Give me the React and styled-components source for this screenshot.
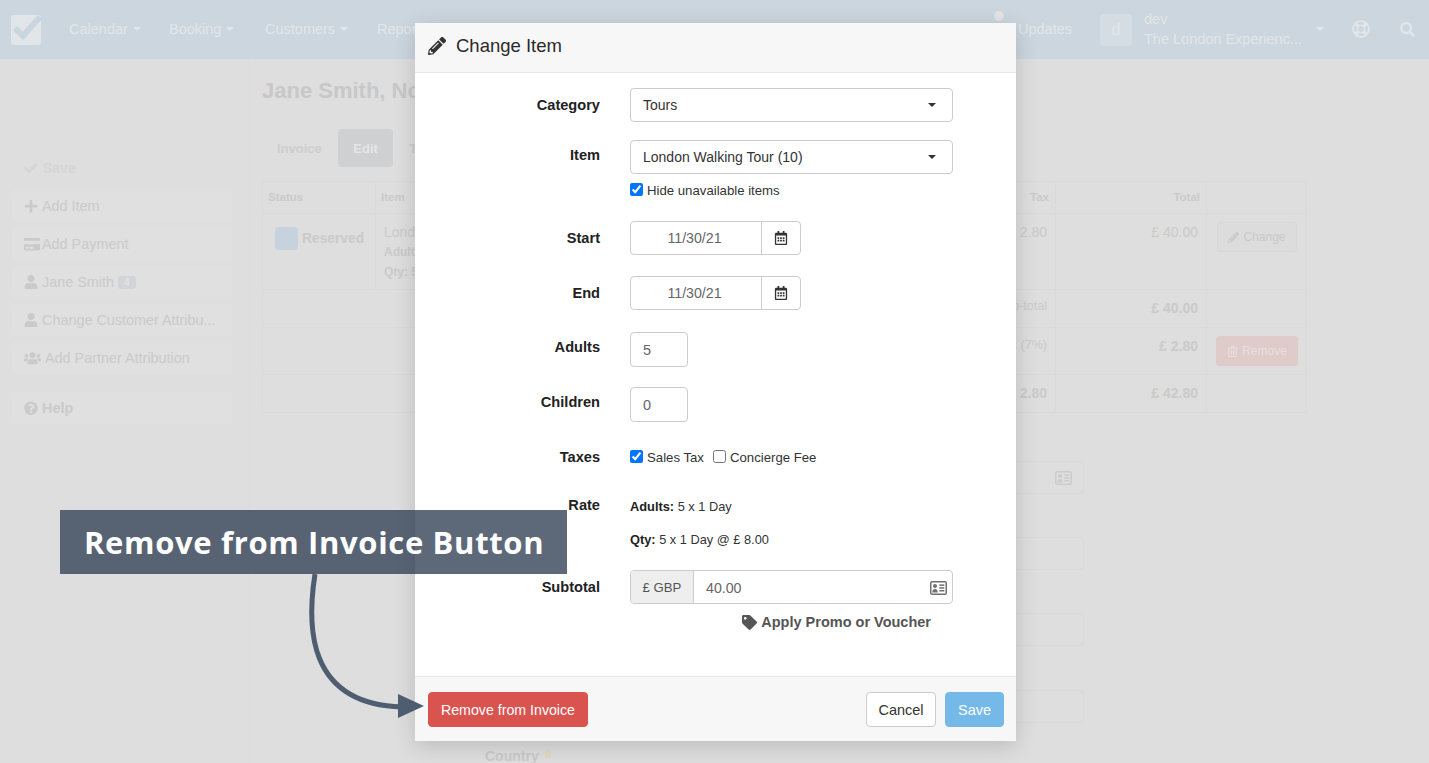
import React from 'react';
import styled, { createGlobalStyle } from 'styled-components';
import {
  FaPencilAlt, FaPlus, FaCreditCard, FaUser, FaUsers, FaQuestionCircle, FaTag,
  FaRegCalendarAlt, FaRegTrashAlt, FaSearch, FaCheck, FaStar, FaRegLifeRing,
} from 'react-icons/fa';

const Global = createGlobalStyle`
  html, body { margin: 0; padding: 0; height: 100%; overflow: hidden; }
  body { font-family: "Liberation Sans", Arial, sans-serif; font-size: 14px; background: #dedede; }
  * { box-sizing: border-box; }
`;

const Page = styled.div`
  position: relative;
  width: 1429px;
  height: 763px;
  overflow: hidden;
  background: #dedede;
  color: #cacaca;
`;

/* ---- dimmed page behind the modal ---- */
const Navbar = styled.header`
  display: flex;
  align-items: center;
  height: 59px;
  padding: 0 0 2px 11px;
  background: #cbd6de;
  color: #e2e6e9;
  font-size: 14.5px;
`;
const LogoLink = styled.span`
  display: flex;
  width: 58px;
  margin-top: 2px;
`;
const NavLink = styled.span`
  display: flex;
  align-items: center;
  gap: 5px;
  width: ${(p) => p.$w}px;
  white-space: nowrap;
`;
const Caret = styled.i`
  display: inline-block;
  border-top: 4px solid ${(p) => p.$color || 'currentColor'};
  border-left: 4px solid transparent;
  border-right: 4px solid transparent;
`;
const NavRight = styled.div`
  display: flex;
  align-items: center;
  margin-left: auto;
  padding-right: 14px;
`;
const UpdatesLink = styled.span`
  position: relative;
  width: 82px;
  &::before {
    content: '';
    position: absolute;
    left: -24px;
    top: -10px;
    width: 10px;
    height: 10px;
    border-radius: 50%;
    background: #e2e4e6;
  }
`;
const Avatar = styled.span`
  display: flex;
  align-items: center;
  justify-content: center;
  width: 32px;
  height: 32px;
  margin: 2px 12px 0 0;
  border-radius: 4px;
  background: #d4dde3;
  font-size: 17px;
`;
const Account = styled.div`
  width: 172px;
  line-height: 20px;
  white-space: nowrap;
  margin-top: 1px;
`;
const NavIcons = styled.div`
  display: flex;
  align-items: center;
  font-size: 16px;
  gap: 30px;
  margin: 1px 0 0 28px;
`;

const Layout = styled.div`
  display: flex;
  height: 704px;
`;
const Sidebar = styled.aside`
  flex: none;
  width: 249px;
  padding: 100px 16px 0 12px;
  border-right: 1px solid #dcdcdc;
`;
const SaveLine = styled.div`
  display: flex;
  align-items: center;
  gap: 6px;
  height: 18px;
  padding-left: 12px;
  margin-bottom: 13px;
  font-weight: bold;
  color: #d5d5d5;
`;
const SideButton = styled.div`
  display: flex;
  align-items: center;
  gap: ${(p) => p.$gap ?? 4}px;
  height: 32px;
  margin-bottom: ${(p) => p.$after || 6}px;
  padding-left: 12px;
  border-radius: 4px;
  background: #e0e0e0;
  font-size: 14.4px;
  font-weight: ${(p) => (p.$bold ? 'bold' : 'normal')};
  white-space: nowrap;
  svg { flex: none; width: ${(p) => p.$icon || 14}px; }
`;
const CountBadge = styled.b`
  padding: 1px 6px;
  border-radius: 3px;
  background: #d2d4d8;
  color: #e2e2e2;
  font-size: 10px;
`;
const Main = styled.main`
  flex: 1;
  padding: 19px 0 0 13px;
`;
const Title = styled.h1`
  margin: 0 0 26px;
  font-size: 22px;
  line-height: 25px;
  font-weight: bold;
  color: #c8c8c8;
  white-space: nowrap;
`;
const Tabs = styled.div`
  display: flex;
  gap: 1px;
  margin-bottom: 14px;
`;
const Tab = styled.span`
  display: flex;
  align-items: center;
  height: 38px;
  padding: 0 15.5px 0 15px;
  border-radius: 4px;
  font-size: 13px;
  font-weight: bold;
  color: ${(p) => (p.$active ? '#e6e6e6' : '#cdcdcd')};
  background: ${(p) => (p.$active ? '#cfd0d1' : 'transparent')};
`;
const Table = styled.table`
  table-layout: fixed;
  width: 1045px;
  border-collapse: collapse;
  font-size: 14px;
`;
const Th = styled.th`
  height: 32px;
  padding: 0 6px 2px 5px;
  border: 1px solid #dadada;
  font-size: 11.5px;
  font-weight: bold;
  color: #cacaca;
  text-align: ${(p) => p.$align || 'left'};
`;
const Td = styled.td`
  height: ${(p) => p.$h}px;
  padding: ${(p) => p.$top ?? 10}px 8px 0;
  border: 1px solid #dadada;
  vertical-align: top;
  text-align: ${(p) => p.$align || 'left'};
  font-weight: ${(p) => (p.$bold ? 'bold' : 'normal')};
  font-size: ${(p) => p.$size || 14}px;
  overflow: hidden;
  white-space: nowrap;
`;
const StatusCell = styled.div`
  display: flex;
  align-items: center;
  gap: 4px;
  padding: 5px 0 0 4px;
  font-weight: bold;
  font-size: 13.8px;
`;
const Swatch = styled.i`
  width: 23px;
  height: 23px;
  border-radius: 4px;
  background: #c6d3de;
`;
const ItemLine = styled.div`
  font-size: ${(p) => p.$size || 12}px;
  line-height: 20px;
  font-weight: ${(p) => (p.$bold ? 'bold' : 'normal')};
`;
const GhostButton = styled.span`
  display: inline-flex;
  align-items: center;
  justify-content: center;
  gap: 4px;
  width: ${(p) => p.$w}px;
  height: 30px;
  margin: ${(p) => p.$m || '2px 0 0 2px'};
  border-radius: 3px;
  font-size: 12px;
  color: ${(p) => (p.$danger ? '#e9dfdf' : '#c9c9c9')};
  background: ${(p) => (p.$danger ? '#e0cbcb' : '#dcdcdc')};
  border: 1px solid ${(p) => (p.$danger ? '#e0cbcb' : '#d8d8d8')};
`;
const BackForm = styled.div`
  display: flex;
  flex-direction: column;
  margin: 48px 0 0 223px;
  width: 599px;
`;
const BackInput = styled.div`
  display: flex;
  align-items: center;
  justify-content: flex-end;
  height: 33px;
  margin-bottom: ${(p) => p.$after || 43}px;
  padding-right: 11px;
  border: 1px solid #d9d9d9;
  border-radius: 4px;
  color: #cbcbcb;
`;
const CountryLabel = styled.div`
  margin-top: -19px;
  font-weight: bold;
  color: #cacaca;
  white-space: nowrap;
  svg { margin-left: 4px; width: 10px; color: #e6d9c0; }
`;

/* ---- modal ---- */
const Modal = styled.section`
  position: absolute;
  left: 415px;
  top: 23px;
  display: flex;
  flex-direction: column;
  width: 601px;
  height: 718px;
  background: #fff;
  border-radius: 2px;
  color: #222;
  box-shadow: 0 5px 22px rgba(0, 0, 0, 0.16);
`;
const ModalHeader = styled.header`
  display: flex;
  align-items: center;
  gap: 10px;
  height: 50px;
  padding: 0 0 4px 13px;
  background: #f7f7f7;
  border-bottom: 1px solid #e8e8e8;
  font-size: 18.5px;
  color: #2b2b2b;
  svg { width: 18px; height: 18px; color: #333; }
`;
const ModalBody = styled.div`
  flex: 1;
  padding-top: 15px;
`;
const Row = styled.div`
  display: grid;
  grid-template-columns: 185px 323px;
  column-gap: 30px;
  margin-bottom: ${(p) => p.$after}px;
`;
const Label = styled.label`
  padding-top: ${(p) => p.$top ?? 8}px;
  text-align: right;
  font-weight: bold;
  font-size: 14.6px;
  line-height: 18px;
  color: #222;
`;
const SelectBox = styled.div`
  display: flex;
  align-items: center;
  justify-content: space-between;
  height: 34px;
  padding: 0 16px 0 12px;
  border: 1px solid #ccc;
  border-radius: 4px;
  font-size: 14px;
  color: #333;
`;
const CheckLine = styled.div`
  display: flex;
  align-items: center;
  gap: ${(p) => p.$gap || 0}px;
  height: ${(p) => p.$h || 17}px;
  margin-top: ${(p) => p.$top || 0}px;
  font-size: 13.2px;
  color: #333;
`;
const CheckItem = styled.label`
  display: flex;
  align-items: center;
  gap: 4px;
  input { margin: -3px 0 0; width: 13px; height: 13px; }
`;
const DateGroup = styled.div`
  display: flex;
  width: 171px;
  height: 34px;
  border: 1px solid #ccc;
  border-radius: 4px;
`;
const DateInput = styled.input`
  width: 131px;
  min-width: 0;
  padding: 0 3px 0 0;
  border: 0;
  border-right: 1px solid #ccc;
  border-radius: 4px 0 0 4px;
  background: transparent;
  text-align: center;
  font: 14.2px "Liberation Sans", Arial, sans-serif;
  color: #666;
`;
const DateAddon = styled.span`
  flex: 1;
  display: flex;
  align-items: center;
  justify-content: center;
  color: #333;
  font-size: 14px;
`;
const NumberInput = styled.input`
  width: 58px;
  height: 35px;
  padding: 0 12px;
  border: 1px solid #ccc;
  border-radius: 4px;
  font: 14.5px "Liberation Sans", Arial, sans-serif;
  color: #666;
`;
const RateLine = styled.div`
  font-size: 12.8px;
  line-height: 18px;
  color: #333;
  margin-bottom: ${(p) => p.$after || 0}px;
  b { color: #222; }
`;
const RateList = styled.div`
  padding-top: 2px;
`;
const MoneyGroup = styled.div`
  display: flex;
  height: 34px;
  border: 1px solid #ccc;
  border-radius: 4px;
  overflow: hidden;
`;
const Currency = styled.span`
  display: flex;
  align-items: center;
  justify-content: center;
  width: 63px;
  background: #eee;
  border-right: 1px solid #ccc;
  font-size: 13.2px;
  color: #555;
`;
const MoneyInput = styled.div`
  flex: 1;
  display: flex;
  align-items: center;
  justify-content: space-between;
  padding: 1px 5px 0 12px;
  font-size: 14.2px;
  color: #666;
`;
const PromoLink = styled.div`
  display: flex;
  align-items: center;
  justify-content: flex-end;
  gap: 4px;
  margin-top: 9px;
  padding-right: 22px;
  font-weight: bold;
  font-size: 14.5px;
  line-height: 18px;
  color: #555;
  svg { width: 15px; height: 15px; }
`;
const ModalFooter = styled.footer`
  display: flex;
  align-items: center;
  height: 65px;
  padding: 0 12px 0 13px;
  background: #f7f7f7;
  border-top: 1px solid #e8e8e8;
`;
const Button = styled.button`
  height: 35px;
  padding: 1px 0 0;
  width: ${(p) => p.$w}px;
  margin-left: ${(p) => p.$left || '0'};
  border: 1px solid ${(p) => p.$border};
  border-radius: 4px;
  background: ${(p) => p.$bg};
  color: ${(p) => p.$color};
  font: ${(p) => p.$size || 14.5}px "Liberation Sans", Arial, sans-serif;
`;

/* ---- annotation over everything ---- */
const Callout = styled.div`
  position: absolute;
  left: 60px;
  top: 510px;
  width: 507px;
  height: 64px;
  display: flex;
  align-items: center;
  padding-left: 24px;
  background: rgba(52, 68, 88, 0.8);
  color: #fff;
  font-family: "Open Sans", Inter, sans-serif;
  font-size: 31px;
  font-weight: 700;
  letter-spacing: 0.66px;
  white-space: nowrap;
`;
const ArrowLayer = styled.svg`
  position: absolute;
  left: 0;
  top: 0;
  pointer-events: none;
`;

const LogoMark = () => (
  <svg width="31" height="32" viewBox="0 0 31 32">
    <rect x="0" y="1" width="30" height="30" rx="3" fill="#e3e6e8" />
    <path d="M4 14l8 8L29 3" fill="none" stroke="#c9d6e0" strokeWidth="6" />
  </svg>
);

const CardIcon = ({ color }) => (
  <svg width="17" height="14" viewBox="0 0 17 14" fill={color}>
    <rect x="0.75" y="0.75" width="15.5" height="12.5" rx="1.5" fill="none" stroke={color} strokeWidth="1.5" />
    <circle cx="5" cy="5" r="2" />
    <path d="M2.3 11.4c0-2.2 1.2-3.3 2.7-3.3s2.7 1.1 2.7 3.3z" />
    <rect x="9.3" y="3.4" width="5" height="1.5" />
    <rect x="9.3" y="6.2" width="5" height="1.5" />
    <rect x="9.3" y="9" width="5" height="1.5" />
  </svg>
);

const App = () => (
  <Page>
    <Global />
    <Navbar>
      <LogoLink><LogoMark /></LogoLink>
      <NavLink $w={100}>Calendar <Caret /></NavLink>
      <NavLink $w={96}>Booking <Caret /></NavLink>
      <NavLink $w={112}>Customers <Caret /></NavLink>
      <NavLink $w={80}>Reports <Caret /></NavLink>
      <NavRight>
        <UpdatesLink>Updates</UpdatesLink>
        <Avatar>d</Avatar>
        <Account>
          <div>dev</div>
          <div>The London Experienc...</div>
        </Account>
        <Caret />
        <NavIcons>
          <FaRegLifeRing size={18} />
          <FaSearch size={15} />
        </NavIcons>
      </NavRight>
    </Navbar>

    <Layout>
      <Sidebar>
        <SaveLine><FaCheck size={13} /> Save</SaveLine>
        <SideButton><FaPlus /> Add Item</SideButton>
        <SideButton $icon={16} $gap={2}><FaCreditCard /> Add Payment</SideButton>
        <SideButton><FaUser /> Jane Smith <CountBadge>4</CountBadge></SideButton>
        <SideButton><FaUser /> Change Customer Attribu...</SideButton>
        <SideButton $icon={17} $after={18}><FaUsers /> Add Partner Attribution</SideButton>
        <SideButton $bold><FaQuestionCircle /> Help</SideButton>
      </Sidebar>
      <Main>
        <Title>Jane Smith, Nov 30</Title>
        <Tabs>
          <Tab>Invoice</Tab>
          <Tab $active>Edit</Tab>
          <Tab>Tickets</Tab>
        </Tabs>
        <Table>
          <colgroup>
            <col width="113" />
            <col />
            <col width="100" />
            <col width="151" />
            <col width="100" />
          </colgroup>
          <thead>
            <tr>
              <Th>Status</Th>
              <Th>Item</Th>
              <Th $align="right">Tax</Th>
              <Th $align="right">Total</Th>
              <Th />
            </tr>
          </thead>
          <tbody>
            <tr>
              <Td $h={76} $top={8}>
                <StatusCell><Swatch /> Reserved</StatusCell>
              </Td>
              <Td $h={76} $top={8}>
                <ItemLine $size={14}>London Walking Tour</ItemLine>
                <ItemLine $bold>Adults: 5</ItemLine>
                <ItemLine $bold>Qty: 5</ItemLine>
              </Td>
              <Td $h={76} $align="right">£ 2.80</Td>
              <Td $h={76} $align="right">£ 40.00</Td>
              <Td $h={76} $top={6}>
                <GhostButton $w={80}><FaPencilAlt size={11} /> Change</GhostButton>
              </Td>
            </tr>
            <tr>
              <Td $h={38} $top={9} colSpan={3} $align="right" $size={12.5}>Sub-total</Td>
              <Td $h={38} $align="right" $bold>£ 40.00</Td>
              <Td $h={38} />
            </tr>
            <tr>
              <Td $h={47} $top={10} colSpan={3} $align="right" $size={12.5}>Sales Tax (7%)</Td>
              <Td $h={47} $align="right" $bold>£ 2.80</Td>
              <Td $h={47} $top={7}>
                <GhostButton $danger $w={82} $m="1px 0 0 1px"><FaRegTrashAlt size={11} /> Remove</GhostButton>
              </Td>
            </tr>
            <tr>
              <Td $h={38} colSpan={3} $align="right" $bold>£ 2.80</Td>
              <Td $h={38} $align="right" $bold>£ 42.80</Td>
              <Td $h={38} />
            </tr>
          </tbody>
        </Table>
        <BackForm>
          <BackInput><CardIcon color="#cbcbcb" /></BackInput>
          <BackInput />
          <BackInput $after={44} />
          <BackInput />
          <CountryLabel>Country<FaStar /></CountryLabel>
        </BackForm>
      </Main>
    </Layout>

    <Modal>
      <ModalHeader><FaPencilAlt /> Change Item</ModalHeader>
      <ModalBody>
        <Row $after={18}>
          <Label>Category</Label>
          <SelectBox>Tours <Caret $color="#333" /></SelectBox>
        </Row>
        <Row $after={22}>
          <Label $top={6}>Item</Label>
          <div>
            <SelectBox>London Walking Tour (10) <Caret $color="#333" /></SelectBox>
            <CheckLine $top={8}>
              <CheckItem><input type="checkbox" defaultChecked /> Hide unavailable items</CheckItem>
            </CheckLine>
          </div>
        </Row>
        <Row $after={21}>
          <Label>Start</Label>
          <DateGroup>
            <DateInput defaultValue="11/30/21" />
            <DateAddon><FaRegCalendarAlt /></DateAddon>
          </DateGroup>
        </Row>
        <Row $after={22}>
          <Label>End</Label>
          <DateGroup>
            <DateInput defaultValue="11/30/21" />
            <DateAddon><FaRegCalendarAlt /></DateAddon>
          </DateGroup>
        </Row>
        <Row $after={20}>
          <Label $top={6}>Adults</Label>
          <NumberInput defaultValue="5" />
        </Row>
        <Row $after={26}>
          <Label $top={6}>Children</Label>
          <NumberInput defaultValue="0" />
        </Row>
        <Row $after={30}>
          <Label $top={0}>Taxes</Label>
          <CheckLine $gap={9} $top={1}>
            <CheckItem><input type="checkbox" defaultChecked /> Sales Tax</CheckItem>
            <CheckItem><input type="checkbox" /> Concierge Fee</CheckItem>
          </CheckLine>
        </Row>
        <Row $after={21}>
          <Label $top={0}>Rate</Label>
          <RateList>
            <RateLine $after={15}><b>Adults:</b> 5 x 1 Day</RateLine>
            <RateLine><b>Qty:</b> 5 x 1 Day @ £ 8.00</RateLine>
          </RateList>
        </Row>
        <Row $after={0}>
          <Label>Subtotal</Label>
          <div>
            <MoneyGroup>
              <Currency>£ GBP</Currency>
              <MoneyInput>40.00 <CardIcon color="#707070" /></MoneyInput>
            </MoneyGroup>
            <PromoLink><FaTag /> Apply Promo or Voucher</PromoLink>
          </div>
        </Row>
      </ModalBody>
      <ModalFooter>
        <Button $w={160} $size={14.2} $bg="#d9534f" $border="#d9534f" $color="#fff">Remove from Invoice</Button>
        <Button $w={70} $left="auto" $bg="#fff" $border="#ccc" $color="#333">Cancel</Button>
        <Button $w={59} $left="9px" $bg="#75b9e8" $border="#75b9e8" $color="#fff">Save</Button>
      </ModalFooter>
    </Modal>

    <Callout>Remove from Invoice Button</Callout>
    <ArrowLayer width="1429" height="763" viewBox="0 0 1429 763">
      <path d="M315 574C307 625 306 704 402 707" fill="none" stroke="#4f5d70" strokeWidth="5" />
      <path d="M398 694L424 706L398 718Z" fill="#4f5d70" />
    </ArrowLayer>
  </Page>
);

export default App;
